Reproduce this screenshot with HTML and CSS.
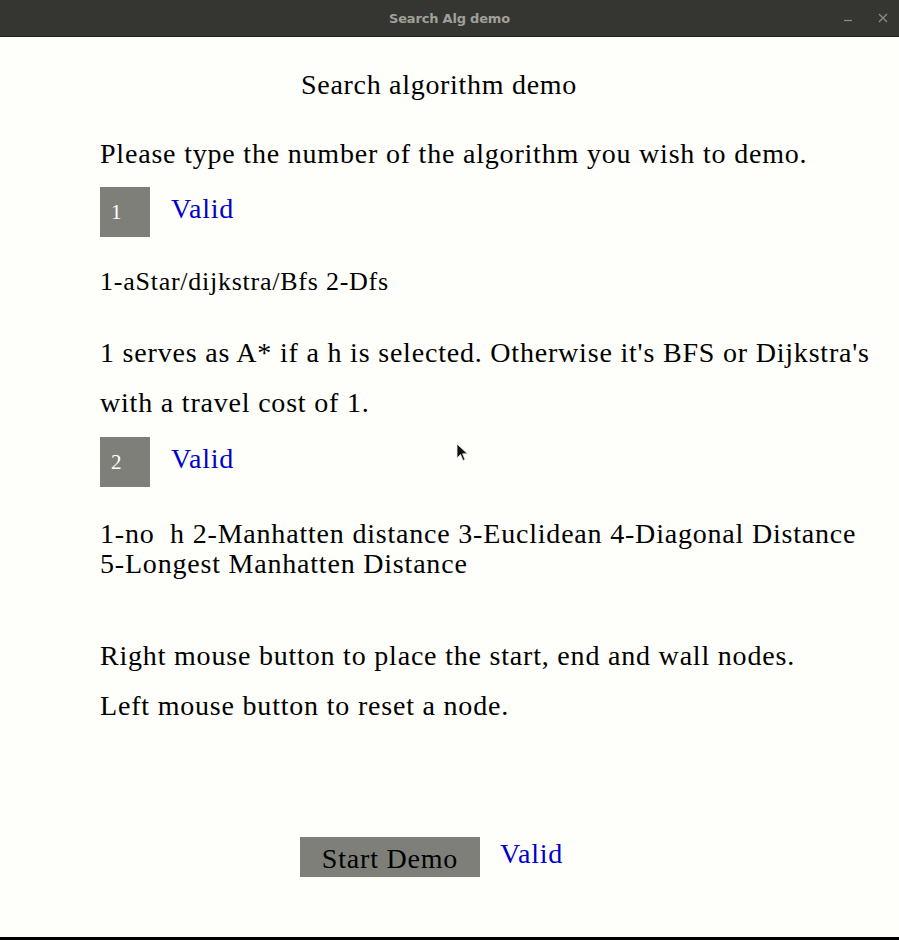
FILE: index.html
```html
<!DOCTYPE html>
<html>
<head>
<meta charset="utf-8">
<title>Search Alg demo</title>
<link rel="stylesheet" href="styles.css">
</head>
<body>
<div class="window">
  <header class="titlebar">
    <span class="title">Search Alg demo</span>
    <div class="controls">
      <svg class="ctl" width="10" height="10" viewBox="0 0 10 10"><path d="M1 7.5 H9" stroke="#8c8c87" stroke-width="1.2"/></svg>
      <svg class="ctl" width="10" height="10" viewBox="0 0 10 10"><path d="M1 1 L9 9 M9 1 L1 9" stroke="#8c8c87" stroke-width="1.3"/></svg>
    </div>
  </header>
  <main class="content">
    <div class="heading">Search algorithm demo</div>
    <div class="text">Please type the number of the algorithm you wish to demo.</div>
    <div class="entry-row">
      <div class="entry">1</div>
      <div class="valid">Valid</div>
    </div>
    <div class="text small">1-aStar/dijkstra/Bfs 2-Dfs</div>
    <div class="text para">1 serves as A* if a h is selected. Otherwise it's BFS or Dijkstra's<br>with a travel cost of 1.</div>
    <div class="entry-row second">
      <div class="entry">2</div>
      <div class="valid">Valid</div>
    </div>
    <div class="condensed">1-no&nbsp; h 2-Manhatten distance 3-Euclidean 4-Diagonal Distance<br>5-Longest Manhatten Distance</div>
    <div class="text mouse">Right mouse button to place the start, end and wall nodes.<br>Left mouse button to reset a node.</div>
    <div class="start-row">
      <div class="start-btn">Start Demo</div>
      <div class="valid">Valid</div>
    </div>
    <svg class="cursor" width="14" height="20" viewBox="0 0 14 20">
      <path d="M1 1 L1 15 L4.5 11.5 L7 17.5 L9 16.6 L6.6 10.8 L11.5 10.8 Z" fill="#111" stroke="#eee" stroke-width="0.8"/>
    </svg>
  </main>
  <div class="bottom-bar"></div>
</div>
</body>
</html>
```
FILE: styles.css
```css
html, body {
  margin: 0;
  padding: 0;
  background: #fefefa;
}
.window {
  width: 899px;
  height: 940px;
  display: flex;
  flex-direction: column;
  background: #fefefa;
  font-family: "Liberation Serif", "Times New Roman", serif;
  color: #000;
  letter-spacing: 0.8px;
}
.titlebar {
  height: 37px;
  flex: none;
  background: #353531;
  border-bottom: 1px solid #222220;
  box-sizing: border-box;
  display: flex;
  align-items: center;
  justify-content: center;
  position: relative;
  letter-spacing: normal;
}
.title {
  font-family: "DejaVu Sans", sans-serif;
  font-weight: bold;
  font-size: 13px;
  color: #a0a09a;
  letter-spacing: -0.2px;
}
.controls {
  position: absolute;
  left: 843px;
  top: 13px;
  display: flex;
  gap: 25px;
}
.ctl {
  display: block;
}
.content {
  flex: 1;
  position: relative;
  padding-left: 100px;
}
.heading {
  font-size: 28px;
  line-height: 50px;
  margin-top: 23px;
  padding-left: 201px;
  letter-spacing: 0.7px;
}
.text {
  font-size: 28px;
  line-height: 50px;
  margin-top: 19px;
}
.entry-row {
  display: flex;
  align-items: flex-start;
  gap: 21px;
  height: 50px;
  margin-top: 8px;
}
.entry-row.second {
  margin-top: 9px;
}
.entry {
  width: 50px;
  height: 50px;
  background: #7f7f7a;
  color: #fff;
  font-size: 21px;
  line-height: 51px;
  padding-left: 11px;
  box-sizing: border-box;
  letter-spacing: normal;
}
.valid {
  color: #0000cc;
  font-size: 28px;
  line-height: 43px;
}
.text.small {
  font-size: 26px;
  margin-top: 20px;
  letter-spacing: 0.75px;
}
.text.para {
  margin-top: 21px;
}
.condensed {
  margin-top: 32px;
  font-size: 28px;
  line-height: 30px;
  white-space: nowrap;
}
.text.mouse {
  margin-top: 52px;
}
.start-row {
  display: flex;
  align-items: flex-start;
  gap: 20px;
  margin-top: 106px;
  padding-left: 200px;
}
.start-btn {
  width: 180px;
  height: 40px;
  background: #7f7f7a;
  font-size: 28px;
  line-height: 43px;
  text-align: center;
}
.start-row .valid {
  line-height: 33px;
}
.cursor {
  position: absolute;
  left: 456px;
  top: 406px;
}
.bottom-bar {
  height: 3px;
  background: #000;
  flex: none;
}
```
